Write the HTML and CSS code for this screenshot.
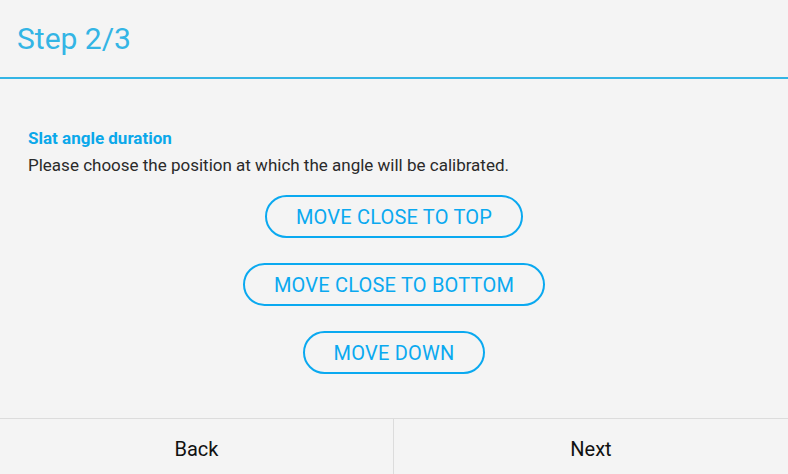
FILE: index.html
```html
<!DOCTYPE html>
<html lang="en">
<head>
<meta charset="UTF-8">
<meta name="viewport" content="width=device-width, initial-scale=1.0">
<title>Step 2/3</title>
<link rel="stylesheet" href="styles.css">
</head>
<body>

<div class="screen">
    <div class="header">
        <h1>Step 2/3</h1>
    </div>

    <div class="content">
        <h2>Slat angle duration</h2>
        <p>Please choose the position at which the angle will be calibrated.</p>
        <div class="actions">
            <button class="pill">MOVE CLOSE TO TOP</button>
            <button class="pill">MOVE CLOSE TO BOTTOM</button>
            <button class="pill">MOVE DOWN</button>
        </div>
    </div>

    <div class="footer">
        <button class="nav">Back</button>
        <button class="nav">Next</button>
    </div>
</div>

</body>
</html>
```

FILE: styles.css
```css
html, body {
    margin: 0;
    height: 100%;
}
body {
    font-family: Roboto, "Liberation Sans", sans-serif;
    background-color: #f4f4f4;
}
.screen {
    display: flex;
    flex-direction: column;
    height: 100%;
}
.header {
    height: 79px;
    box-sizing: border-box;
    border-bottom: 2px solid #33b5e5;
    display: flex;
    align-items: center;
    padding-left: 17px;
}
.header h1 {
    margin: 0;
    font-size: 30px;
    font-weight: normal;
    color: #33b5e5;
}
.content {
    flex: 1;
    padding: 48px 28px 0;
}
.content h2 {
    margin: 0;
    font-size: 17px;
    font-weight: bold;
    color: #0ba8ea;
    line-height: 22px;
}
.content p {
    margin: 5px 0 0;
    font-size: 17px;
    color: #2a2a2a;
    line-height: 22px;
}
.actions {
    display: flex;
    flex-direction: column;
    align-items: center;
    gap: 25px;
    margin-top: 19px;
}
.pill {
    height: 43px;
    padding: 0 29px;
    border: 2px solid #0aa9f0;
    border-radius: 22px;
    background: transparent;
    color: #0aa9f0;
    font-family: Roboto, "Liberation Sans", sans-serif;
    font-size: 20px;
    letter-spacing: 0.2px;
    cursor: pointer;
}
.footer {
    height: 55px;
    border-top: 1px solid #dcdcdc;
    display: flex;
}
.nav {
    flex: 1;
    border: none;
    background: transparent;
    font-family: Roboto, "Liberation Sans", sans-serif;
    font-size: 20px;
    color: #111;
    padding: 4px 0 0;
    cursor: pointer;
}
.nav:first-child {
    flex: 0 0 393px;
}
.nav + .nav {
    border-left: 1px solid #dcdcdc;
}
```
